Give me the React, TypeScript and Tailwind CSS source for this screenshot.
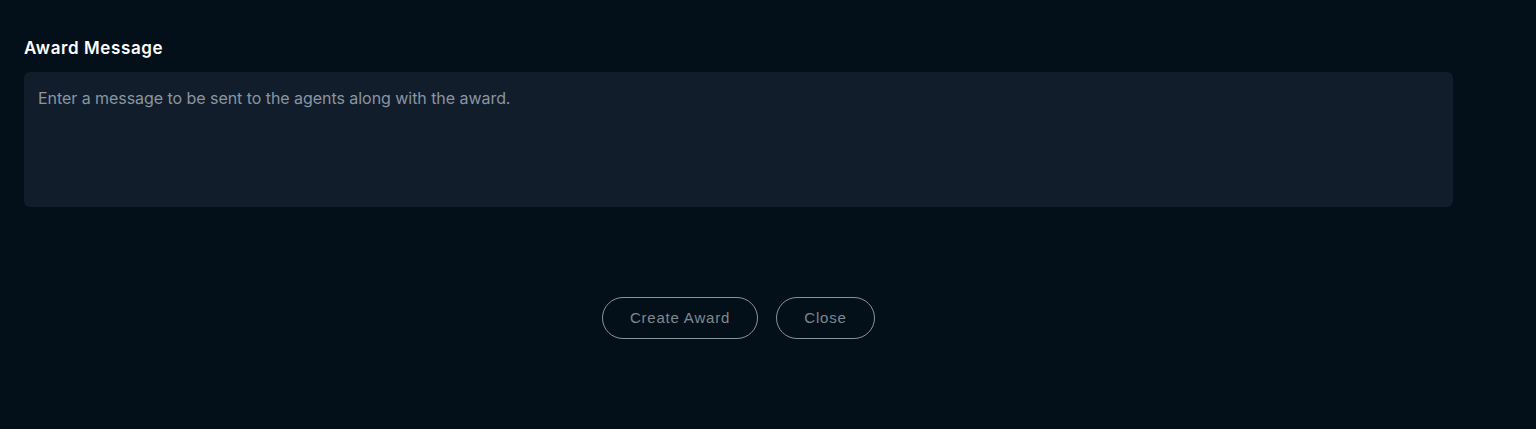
import * as React from "react";

export default function App() {
  return (
    <div className="min-h-[429px] w-full bg-[#03101a] font-['Inter',sans-serif]">
      <div className="w-[1429px] ml-6 pt-[38px]">
        <label className="block text-[17px] font-semibold leading-5 tracking-[0.6px] text-white">
          Award Message
        </label>
        <textarea
          className="mt-[14px] block h-[135px] w-full resize-none rounded-md bg-[#111d2a] px-[14px] py-[16px] text-[16px] leading-5 tracking-[-0.05px] text-gray-300 placeholder:text-[#8b95a1] outline-none"
          placeholder="Enter a message to be sent to the agents along with the award."
        />
        <div className="mt-[90px] flex justify-center gap-[18px]">
          <button className="h-[42px] w-[156px] rounded-full border border-[#8a939c] text-[15px] tracking-[0.8px] font-['Liberation_Sans',sans-serif] text-[#7f8891]">
            Create Award
          </button>
          <button className="h-[42px] w-[99px] rounded-full border border-[#8a939c] text-[15px] tracking-[0.8px] font-['Liberation_Sans',sans-serif] text-[#7f8891]">
            Close
          </button>
        </div>
      </div>
    </div>
  );
}
